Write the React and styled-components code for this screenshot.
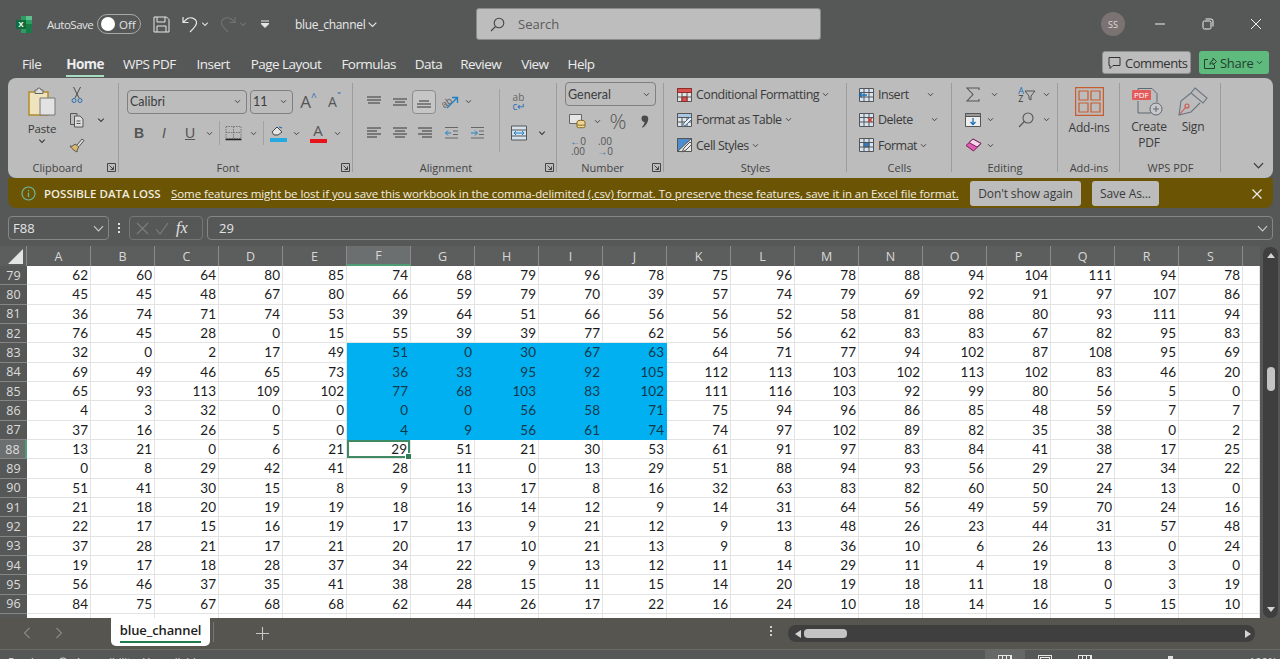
import React from 'react'
import styled, {createGlobalStyle} from 'styled-components'

const UI = '"Open Sans", "Noto Sans", sans-serif'
const COLS = 'ABCDEFGHIJKLMNOPQRS'.split('')
const ROWS = [
  [79, 62, 60, 64, 80, 85, 74, 68, 79, 96, 78, 75, 96, 78, 88, 94, 104, 111, 94, 78],
  [80, 45, 45, 48, 67, 80, 66, 59, 79, 70, 39, 57, 74, 79, 69, 92, 91, 97, 107, 86],
  [81, 36, 74, 71, 74, 53, 39, 64, 51, 66, 56, 56, 52, 58, 81, 88, 80, 93, 111, 94],
  [82, 76, 45, 28, 0, 15, 55, 39, 39, 77, 62, 56, 56, 62, 83, 83, 67, 82, 95, 83],
  [83, 32, 0, 2, 17, 49, 51, 0, 30, 67, 63, 64, 71, 77, 94, 102, 87, 108, 95, 69],
  [84, 69, 49, 46, 65, 73, 36, 33, 95, 92, 105, 112, 113, 103, 102, 113, 102, 83, 46, 20],
  [85, 65, 93, 113, 109, 102, 77, 68, 103, 83, 102, 111, 116, 103, 92, 99, 80, 56, 5, 0],
  [86, 4, 3, 32, 0, 0, 0, 0, 56, 58, 71, 75, 94, 96, 86, 85, 48, 59, 7, 7],
  [87, 37, 16, 26, 5, 0, 4, 9, 56, 61, 74, 74, 97, 102, 89, 82, 35, 38, 0, 2],
  [88, 13, 21, 0, 6, 21, 29, 51, 21, 30, 53, 61, 91, 97, 83, 84, 41, 38, 17, 25],
  [89, 0, 8, 29, 42, 41, 28, 11, 0, 13, 29, 51, 88, 94, 93, 56, 29, 27, 34, 22],
  [90, 51, 41, 30, 15, 8, 9, 13, 17, 8, 16, 32, 63, 83, 82, 60, 50, 24, 13, 0],
  [91, 21, 18, 20, 19, 19, 18, 16, 14, 12, 9, 14, 31, 64, 56, 49, 59, 70, 24, 16],
  [92, 22, 17, 15, 16, 19, 17, 13, 9, 21, 12, 9, 13, 48, 26, 23, 44, 31, 57, 48],
  [93, 37, 28, 21, 17, 21, 20, 17, 10, 21, 13, 9, 8, 36, 10, 6, 26, 13, 0, 24],
  [94, 19, 17, 18, 28, 37, 34, 22, 9, 13, 12, 11, 14, 29, 11, 4, 19, 8, 3, 0],
  [95, 56, 46, 37, 35, 41, 38, 28, 15, 11, 15, 14, 20, 19, 18, 11, 18, 0, 3, 19],
  [96, 84, 75, 67, 68, 68, 62, 44, 26, 17, 22, 16, 24, 10, 18, 14, 16, 5, 15, 10],
]
const TABS = [
  ['File', 25],
  ['Home', 19],
  ['WPS PDF', 21],
  ['Insert', 21],
  ['Page Layout', 20],
  ['Formulas', 19],
  ['Data', 18],
  ['Review', 20],
  ['View', 19],
  ['Help', 0],
]

const Ico = ({w = 18, h = 18, children, vb, sw = 1, stroke = '#555'}) => (
  <svg width={w} height={h} viewBox={vb || `0 0 ${w} ${h}`} fill="none" stroke={stroke} strokeWidth={sw}>
    {children}
  </svg>
)
const Chev = ({s = 8, c = '#3c3c3c', sw = 1.3}) => (
  <svg width={s} height={s} viewBox="0 0 10 10" fill="none" stroke={c} strokeWidth={sw}>
    <path d="M1.5 3.2 5 6.8l3.5-3.6" />
  </svg>
)
const Launcher = () => (
  <LauncherBox>
    <svg width="9" height="9" viewBox="0 0 9 9" fill="none" stroke="#444">
      <path d="M.5 .5h8v8h-8zM2.5 2.5l4 4M6.5 3.5v3h-3" />
    </svg>
  </LauncherBox>
)
const Lines = ({ys, xs, w = 16}) => (
  <Ico w={w} h={14} stroke="#4d4d4d" sw={1.2}>
    {ys.map((y, i) => (
      <path key={y} d={`M${xs[i][0]} ${y}H${xs[i][1]}`} />
    ))}
  </Ico>
)
const Grid5 = ({fill, children}) => (
  <Ico w={17} h={16} stroke="#555">
    <path d="M1.5 1.5h14v13h-14z" fill={fill || '#d8d8d8'} />
    <path d="M1.5 5.5h14M1.5 10h14M6 1.5v13M11 1.5v13" />
    {children}
  </Ico>
)

function Toolbar() {
  return (
    <TitleBar>
      <ExcelLogo>
        <svg width="17" height="17" viewBox="0 0 17 17">
          <path fill="#2d9c62" d="M5 0h11v17H5z" />
          <path fill="#1a7a48" d="M10 8h6v9h-6z" />
          <path fill="#5fc08c" d="M10 0h6v4h-6z" />
          <path fill="#0f6b3a" d="M0 4h10v9H0z" />
          <text x="5" y="11.4" fontSize="8" fontWeight="700" fill="#fff" textAnchor="middle" fontFamily="Liberation Sans">X</text>
        </svg>
      </ExcelLogo>
      <AutoSave>AutoSave</AutoSave>
      <Toggle>
        <Knob />
        <span>Off</span>
      </Toggle>
      <QuickIcon $ml={12}>
        <Ico w={17} h={17} stroke="#e6e6e6">
          <path d="M1 1h12.5L16 3.5V16H1zM4 1v5h8V1M4 16v-6h9v6" />
        </Ico>
      </QuickIcon>
      <QuickIcon $ml={12}>
        <Ico w={16} h={17} stroke="#e6e6e6" sw={1.2}>
          <path d="M1 1v5.5h5.5M1.2 6.3 5.5 2.5c3-1.6 8-.6 9 3.2.7 3-1.5 5.7-6.5 10.3" />
        </Ico>
      </QuickIcon>
      <QuickIcon $ml={3}><Chev s={8} c="#ddd" /></QuickIcon>
      <QuickIcon $ml={11}>
        <Ico w={16} h={17} stroke="#6f7171" sw={1.2}>
          <path d="M15 1v5.5H9.5M14.8 6.3 10.5 2.5c-3-1.6-8-.6-9 3.2-.7 3 1.5 5.7 6.5 10.3" />
        </Ico>
      </QuickIcon>
      <QuickIcon $ml={3}><Chev s={8} c="#6f7171" /></QuickIcon>
      <QuickIcon $ml={14}>
        <Ico w={8} h={8} stroke="#e6e6e6">
          <path d="M0 1h8" />
          <path d="M0 3.5h8L4 7.5z" fill="#e6e6e6" />
        </Ico>
      </QuickIcon>
      <DocName>blue_channel</DocName>
      <QuickIcon $ml={0}><Chev s={11} c="#e6e6e6" sw={1} /></QuickIcon>
      <SearchBox>
        <Ico w={15} h={15} stroke="#444" sw={1.1}>
          <circle cx="9" cy="6" r="4.8" />
          <path d="M5.5 9.5 1 14" />
        </Ico>
        <span>Search</span>
      </SearchBox>
      <Avatar>SS</Avatar>
      <WindowBtn $ml={11}>
        <Ico w={12} h={12} stroke="#eee"><path d="M1 6h10" /></Ico>
      </WindowBtn>
      <WindowBtn $ml={0}>
        <Ico w={12} h={12} stroke="#eee">
          <rect x="1" y="3" width="8" height="8" rx="1.5" />
          <path d="M3.5 1H9a2 2 0 0 1 2 2v5.5" />
        </Ico>
      </WindowBtn>
      <WindowBtn $ml={0}>
        <Ico w={12} h={12} stroke="#eee"><path d="M1 1l10 10M11 1 1 11" /></Ico>
      </WindowBtn>
    </TitleBar>
  )
}

function TabStrip() {
  return (
    <TabBar>
      {TABS.map(([name, gap]) => (
        <Tab key={name} $active={name === 'Home'} $gap={gap}>{name}</Tab>
      ))}
      <TabActions>
        <CommentsBtn>
          <Ico w={13} h={13} stroke="#333">
            <path d="M1 1.5h11v8H5l-3 3v-3H1z" />
          </Ico>
          Comments
        </CommentsBtn>
        <ShareBtn>
          <Ico w={14} h={14} stroke="#26402e">
            <path d="M5 3.5H1.5v9h10V9M7 8.5C7 5.5 9 4.5 10 4.5V2l3.5 3.5L10 9V7c-1 0-2.5 0-3 1.5z" />
          </Ico>
          Share
          <Chev s={7} c="#26402e" />
        </ShareBtn>
      </TabActions>
    </TabBar>
  )
}

function ClipboardGroup() {
  return (
    <Group $w={111}>
      <GroupBody $pl={15}>
        <PasteCol>
          <svg width="30" height="30" viewBox="0 0 30 30" fill="none">
            <path d="M2 5h19v23H2z" fill="#efe3bd" stroke="#b28a2c" strokeWidth="1.5" />
            <path d="M8 5V3h2a2 2 0 0 1 4 0h2v3.5H8z" fill="#ddd" stroke="#666" />
            <path d="M13 11h15v17H13z" fill="#e2e2e2" stroke="#777" />
          </svg>
          <PasteLabel>Paste</PasteLabel>
          <Chev s={8} />
        </PasteCol>
        <Stack $pt={4} $ml={7}>
          <Tool $w={22}>
            <Ico w={14} h={18} stroke="#4a4a4a">
              <path d="M3.5 1 9 12M10.5 1 5 12" />
              <circle cx="4" cy="14.5" r="2" stroke="#2a6db0" />
              <circle cx="10" cy="14.5" r="2" stroke="#2a6db0" />
            </Ico>
          </Tool>
          <ToolLine>
            <Tool $w={22}>
              <Ico w={16} h={16} stroke="#555">
                <path d="M5 12.5H1.5v-11H8v2" />
                <path d="M5.5 4H11l3 3v8H5.5z" fill="#ddd" />
                <path d="M7.5 9h4M7.5 11.5h4" />
              </Ico>
            </Tool>
            <Tool $w={26}><Chev /></Tool>
          </ToolLine>
          <Tool $w={22}>
            <Ico w={16} h={16} stroke="#555">
              <path d="M1 9c2 1 4-1 5-2l4 3c-1 1-2 3-2 5-2-1-5-3-7-6z" fill="#d9b968" />
              <path d="M8 8l5-6 2 1.5-5 6" fill="#ddd" />
            </Ico>
          </Tool>
        </Stack>
      </GroupBody>
      <GroupLabel $pr={12}>Clipboard<Launcher /></GroupLabel>
    </Group>
  )
}

function FontGroup() {
  return (
    <Group $w={234}>
      <GroupBody $pl={8} $column>
        <ToolLine $h={31} $mt={8}>
          <SelectBox $w={120} $h={24}>Calibri<Chev s={7} /></SelectBox>
          <SelectBox $w={43} $h={24} $ml={3}>11<Chev s={7} /></SelectBox>
          <GrowA $size={17} $w={25} $ml={3}>A<sup>^</sup></GrowA>
          <GrowA $size={14} $w={25} $ml={1}>A<sup>ˇ</sup></GrowA>
        </ToolLine>
        <ToolLine $h={32}>
          <Glyph $w={24} $bold>B</Glyph>
          <Glyph $w={26} $italic>I</Glyph>
          <Glyph $w={26} $under>U</Glyph>
          <Tool $w={12}><Chev s={7} /></Tool>
          <VBar />
          <Tool $w={18}>
            <Ico w={17} h={16} stroke="#777">
              <path d="M1 1.5h15v12H1zM8.5 1.5v12M1 7.5h15" strokeDasharray="1.5 1" />
              <path d="M.5 14.5h16" stroke="#222" strokeWidth="1.5" />
            </Ico>
          </Tool>
          <Tool $w={12} $ml={5}><Chev s={7} /></Tool>
          <VBar />
          <Tool $w={20}>
            <svg width="17" height="18" viewBox="0 0 17 18" fill="none" stroke="#444">
              <path d="M2 8l5-5 5 5-4 3H4z" fill="#e4e4e4" />
              <path d="M9 3l3 1" stroke="#1d6fb8" strokeWidth="1.3" />
              <path fill="#25a9e0" stroke="none" d="M0 14h17v4H0z" />
            </svg>
          </Tool>
          <Tool $w={16}><Chev s={7} /></Tool>
          <Tool $w={28}>
            <FontColor>A</FontColor>
          </Tool>
          <Tool $w={10}><Chev s={7} /></Tool>
        </ToolLine>
      </GroupBody>
      <GroupLabel $pr={16}>Font<Launcher /></GroupLabel>
    </Group>
  )
}

function AlignmentGroup() {
  return (
    <Group $w={204}>
      <GroupBody $pl={8}>
        <div>
          <ToolLine $h={31} $mt={8}>
            <Tool $w={26}><Lines ys={[2, 5, 8]} xs={[[1, 15], [1, 15], [2, 14]]} /></Tool>
            <Tool $w={25}><Lines ys={[4, 7, 10]} xs={[[1, 15], [3, 13], [1, 15]]} /></Tool>
            <BoxedTool><Lines ys={[6, 9, 12]} xs={[[3, 13], [1, 15], [1, 15]]} /></BoxedTool>
            <Tool $w={25} $ml={2}>
              <Ico w={18} h={16} stroke="#666">
                <text x="0" y="12" fontSize="10" fill="#666" stroke="none" transform="rotate(-35 5 10)" fontFamily="Liberation Sans">ab</text>
                <path d="M5 14 15 4M10 3.5h5.5V9" stroke="#1f7fc4" strokeWidth="1.3" />
              </Ico>
            </Tool>
            <Tool $w={11}><Chev s={7} /></Tool>
          </ToolLine>
          <ToolLine $h={32}>
            <Tool $w={26}><Lines ys={[2, 5, 8, 11]} xs={[[1, 15], [1, 11], [1, 15], [1, 11]]} /></Tool>
            <Tool $w={25}><Lines ys={[2, 5, 8, 11]} xs={[[1, 15], [3, 13], [1, 15], [3, 13]]} /></Tool>
            <Tool $w={26}><Lines ys={[2, 5, 8, 11]} xs={[[1, 15], [5, 15], [1, 15], [5, 15]]} /></Tool>
            <Tool $w={26}>
              <Ico w={15} h={14} stroke="#666">
                <path d="M1 1.5h13M9 5h5M9 8.5h5M1 12h13" />
                <path d="M7 7H1.5M4 4.5 1.5 7 4 9.5" stroke="#1f7fc4" />
              </Ico>
            </Tool>
            <Tool $w={26}>
              <Ico w={15} h={14} stroke="#666">
                <path d="M1 1.5h13M9 5h5M9 8.5h5M1 12h13" />
                <path d="M1 7h6M5 4.5 7.5 7 5 9.5" stroke="#1f7fc4" />
              </Ico>
            </Tool>
          </ToolLine>
        </div>
        <InnerBar />
        <div>
          <ToolLine $h={31} $mt={8} $ml={8}>
            <Tool $w={22}>
              <WrapIcon>
                <span>ab</span>
                <span>c↵</span>
              </WrapIcon>
            </Tool>
          </ToolLine>
          <ToolLine $h={32} $ml={8}>
            <Tool $w={22}>
              <Ico w={16} h={16} stroke="#555">
                <path d="M.5 1h15v14H.5zM.5 5h15M.5 11h15" fill="#d4e2ee" />
                <path d="M3 8h10M5 6 3 8l2 2M11 6l2 2-2 2" stroke="#1f7fc4" />
              </Ico>
            </Tool>
            <Tool $w={24}><Chev s={8} /></Tool>
          </ToolLine>
        </div>
      </GroupBody>
      <GroupLabel $pr={18}>Alignment<Launcher /></GroupLabel>
    </Group>
  )
}

function NumberGroup() {
  return (
    <Group $w={107}>
      <GroupBody $pl={8} $column>
        <SelectBox $w={91} $h={24} $mt={4}>General<Chev s={7} /></SelectBox>
        <ToolLine $h={26} $mt={2}>
          <Tool $w={26}>
            <Ico w={18} h={16} stroke="#666">
              <path d="M.5 1.5h12v9H.5z" fill="#e5e5e5" />
              <ellipse cx="12" cy="9" rx="4" ry="1.8" fill="#ecd596" stroke="#8a6c1e" />
              <path d="M8 9v5c0 1 8 1 8 0V9M8 11.5c0 1 8 1 8 0" fill="#ecd596" stroke="#8a6c1e" />
            </Ico>
          </Tool>
          <Tool $w={12}><Chev s={7} /></Tool>
          <Percent>%</Percent>
          <Tool $w={24}>
            <svg width="8" height="13" viewBox="0 0 8 13" fill="#4a4a4a">
              <path d="M1 1.5C2 .5 4.500 0 6 1c2 1.500 1.500 5-.5 8C4.500 10.500 3 12 1.500 12.800L1 12c1.500-1.500 2.500-3 2.500-5C2 7 .5 5.500 .5 3.800c0-1 .2-1.700 .5-2.300z" />
            </svg>
          </Tool>
        </ToolLine>
        <ToolLine $h={24}>
          <DecIcon $w={26}><i>←</i>0<br />.00</DecIcon>
          <DecIcon $w={28}>.00<br /><i>→</i>0</DecIcon>
        </ToolLine>
      </GroupBody>
      <GroupLabel $pr={16}>Number<Launcher /></GroupLabel>
    </Group>
  )
}

function StylesGroup() {
  return (
    <Group $w={183}>
      <GroupBody $pl={12} $column $pt={4}>
        <ListTool>
          <Grid5 fill="#e4e4e4">
            <path d="M1.5 1.5h14v4h-14zM6 10h5v4.5H6z" fill="#d9534f" stroke="#8d2b2b" />
          </Grid5>
          <span>Conditional Formatting</span>
          <Chev s={7} />
        </ListTool>
        <ListTool>
          <Grid5 fill="#dfe7ef">
            <path d="M1.5 1.5h14v4h-14z" fill="#a9c6e4" />
            <path d="M6 15l2-4 6-6 2 2-6 6z" fill="#eee" stroke="#4c6f92" />
          </Grid5>
          <span>Format as Table</span>
          <Chev s={7} />
        </ListTool>
        <ListTool>
          <Ico w={17} h={16} stroke="#555">
            <path d="M1.5 1.5h14v13h-14z" fill="#e4e4e4" />
            <path d="M1.5 1.5h14L1.5 14.5z" fill="#4e8ed0" />
            <path d="M6 15l2-4 6-6 2 2-6 6z" fill="#eee" />
          </Ico>
          <span>Cell Styles</span>
          <Chev s={7} />
        </ListTool>
      </GroupBody>
      <GroupLabel>Styles</GroupLabel>
    </Group>
  )
}

function CellsGroup() {
  return (
    <Group $w={105}>
      <GroupBody $pl={11} $column $pt={4}>
        <ListTool $gap={3}>
          <Grid5 fill="#d6e4f2"><path d="M9 8H1.5M4 5.5 1.5 8 4 10.5" stroke="#1a6fb5" strokeWidth="1.3" /></Grid5>
          <CellText $w={46}>Insert</CellText>
          <Chev s={7} />
        </ListTool>
        <ListTool $gap={3}>
          <Grid5 fill="#d6e4f2"><path d="M10 6l4 4M14 6l-4 4" stroke="#d0392e" strokeWidth="1.5" /></Grid5>
          <CellText $w={50}>Delete</CellText>
          <Chev s={7} />
        </ListTool>
        <ListTool $gap={3}>
          <Grid5 fill="#d6e4f2"><path d="M6 5.5h5V10H6z" fill="#2f7fc8" /></Grid5>
          <CellText>Format</CellText>
          <Chev s={7} />
        </ListTool>
      </GroupBody>
      <GroupLabel>Cells</GroupLabel>
    </Group>
  )
}

function EditingGroup() {
  return (
    <Group $w={106}>
      <GroupBody $pl={11} $column $pt={4}>
        <ToolLine $h={26}>
          <Tool $w={20}>
            <Ico w={14} h={15} stroke="#555" sw={1.1}><path d="M13 3V1H1l6 6.5L1 14h12v-2" /></Ico>
          </Tool>
          <Tool $w={22}><Chev s={7} /></Tool>
          <Tool $w={24} $ml={10}>
            <SortIcon><b>A</b><b>Z</b></SortIcon>
            <Ico w={12} h={12} stroke="#555"><path d="M1 2h10L7 7v4l-2-1V7z" /></Ico>
          </Tool>
          <Tool $w={12} $ml={1}><Chev s={7} /></Tool>
        </ToolLine>
        <ToolLine $h={26}>
          <Tool $w={20}>
            <Ico w={16} h={16} stroke="#555">
              <path d="M.5 1.5h15v13H.5z" fill="#eee" />
              <path d="M.5 1.5h15v3H.5z" fill="#999" />
              <path d="M8 6v6.5M5.500 10 8 12.500 10.500 10" stroke="#1a6fb5" strokeWidth="1.3" />
            </Ico>
          </Tool>
          <Tool $w={15}><Chev s={7} /></Tool>
          <Tool $w={28} $ml={14}>
            <Ico w={16} h={16} stroke="#555" sw={1.1}>
              <circle cx="10" cy="6" r="5" />
              <path d="M6.3 9.5 1 15" />
            </Ico>
          </Tool>
          <Tool $w={12}><Chev s={7} /></Tool>
        </ToolLine>
        <ToolLine $h={26}>
          <Tool $w={20}>
            <Ico w={17} h={14} stroke="#7a1f5b">
              <path d="M1 7.5 8 1l8 4.5-7.5 7.5z" fill="#e05bb0" />
              <path d="M4 4.500 12 9l4-3.500L8 1z" fill="#f2d6e8" />
            </Ico>
          </Tool>
          <Tool $w={15}><Chev s={7} /></Tool>
        </ToolLine>
      </GroupBody>
      <GroupLabel>Editing</GroupLabel>
    </Group>
  )
}

function RibbonTail() {
  return (
    <>
      <Group $w={62}>
        <BigTool>
          <svg width="29" height="29" viewBox="0 0 29 29" fill="none" stroke="#c75c2e" strokeWidth="1.2">
            <path d="M.6.6h27.8v27.8H.6z" />
            <path d="M4 4h9v9H4zM16 4h9v9h-9zM4 16h9v9H4zM16 16h9v9h-9z" />
          </svg>
          <BigLabel $mt={4}>Add-ins</BigLabel>
        </BigTool>
        <GroupLabel>Add-ins</GroupLabel>
      </Group>
      <Group $w={101}>
        <BigRow>
          <BigTool $w={58}>
            <PdfIcon>
              <svg width="30" height="30" viewBox="0 0 30 30" fill="none" stroke="#5c6874">
                <path d="M4 8V1.5h14l5 5V15M4 14v12h13" />
                <circle cx="22" cy="22" r="6" fill="#c9c9c9" />
                <path d="M22 19v6M19 22h6" />
              </svg>
              <PdfBadge>PDF</PdfBadge>
            </PdfIcon>
            <BigLabel>Create<br />PDF</BigLabel>
          </BigTool>
          <BigTool $w={30}>
            <svg width="30" height="30" viewBox="0 0 30 30" fill="none" stroke="#6b7580" strokeWidth="1.1">
              <path d="M17 1l12 10-4 5-12-10zM13 6 3 14 1 28l12-3 9-9" />
              <circle cx="9" cy="19" r="2" stroke="#d0524e" />
              <path d="M7.5 20.5 2 27" stroke="#d0524e" />
            </svg>
            <BigLabel>Sign</BigLabel>
          </BigTool>
        </BigRow>
        <GroupLabel>WPS PDF</GroupLabel>
      </Group>
      <CollapseBtn><Chev s={13} sw={1} /></CollapseBtn>
    </>
  )
}

function MessageRow() {
  return (
    <MessageBar>
      <Ico w={15} h={15} stroke="#6fb7a0" sw={1.2}>
        <circle cx="7.5" cy="7.5" r="6.5" />
        <path d="M7.5 6.5V11M7.5 4v1.3" />
      </Ico>
      <MessageTitle>POSSIBLE DATA LOSS</MessageTitle>
      <MessageLink>Some features might be lost if you save this workbook in the comma-delimited (.csv) format. To preserve these features, save it in an Excel file format.</MessageLink>
      <MessageBtn $w={111} $ml={11}>Don't show again</MessageBtn>
      <MessageBtn $w={67} $ml={11}>Save As...</MessageBtn>
      <MessageClose>
        <Ico w={10} h={10} stroke="#eee" sw={1.2}><path d="M.5.5l9 9M9.5.5l-9 9" /></Ico>
      </MessageClose>
    </MessageBar>
  )
}

function FormulaRow() {
  return (
    <FormulaBar>
      <NameBox>
        F88
        <Chev s={13} c="#c8c8c8" sw={0.9} />
      </NameBox>
      <Dots>
        <i /><i /><i />
      </Dots>
      <FxBox>
        <Ico w={13} h={13} stroke="#7d7d7d" sw={1.1}><path d="M1 1l11 11M12 1 1 12" /></Ico>
        <Ico w={14} h={13} stroke="#7d7d7d" sw={1.1}><path d="M1 7l4 5 8-11" /></Ico>
        <FxLabel>fx</FxLabel>
      </FxBox>
      <FormulaInput>
        29
        <Chev s={13} c="#c8c8c8" sw={0.9} />
      </FormulaInput>
    </FormulaBar>
  )
}

function Sheet() {
  return (
    <SheetWrap>
      <Grid>
        <Corner><CornerTriangle /></Corner>
        {COLS.map(c => (
          <ColHead key={c} $active={c === 'F'}>{c}</ColHead>
        ))}
        <ColHead $blank />
        {ROWS.map(([row, ...values]) => (
          <React.Fragment key={row}>
            <RowHead $active={row === 88}>{row}</RowHead>
            {values.map((v, i) => (
              <Cell
                key={i}
                $selected={row >= 83 && row <= 87 && i >= 5 && i <= 9}
                $active={row === 88 && i === 5}
              >
                {v}
              </Cell>
            ))}
            <Cell />
          </React.Fragment>
        ))}
        <RowHead />
        {COLS.map(c => <Cell key={c} />)}
        <Cell />
      </Grid>
      <VScroll>
        <ArrowUp />
        <VTrack><VThumb /></VTrack>
        <ArrowDown />
      </VScroll>
    </SheetWrap>
  )
}

function SheetFooter() {
  return (
    <>
      <SheetTabs>
        <NavArrow>
          <Ico w={8} h={12} stroke="#8a8a88" sw={1.1}><path d="M6.5 1 1.5 6l5 5" /></Ico>
        </NavArrow>
        <NavArrow $ml={24}>
          <Ico w={8} h={12} stroke="#8a8a88" sw={1.1}><path d="M1.5 1l5 5-5 5" /></Ico>
        </NavArrow>
        <SheetTab><span>blue_channel</span></SheetTab>
        <TabDivider />
        <AddSheet>
          <Ico w={13} h={13} stroke="#c8c8c8" sw={1.1}><path d="M6.5 0v13M0 6.5h13" /></Ico>
        </AddSheet>
        <Dots $ml={499} $light>
          <i /><i /><i />
        </Dots>
        <HScroll>
          <ArrowLeft />
          <HThumb />
          <ArrowRight />
        </HScroll>
      </SheetTabs>
      <StatusBar>
        <StatusText $w={48}>Ready</StatusText>
        <StatusIcon>
          <Ico w={14} h={14} stroke="#ddd"><circle cx="7" cy="7" r="5" /></Ico>
        </StatusIcon>
        <StatusText $ml={5}>Accessibility: Unavailable</StatusText>
        <ViewBtn $active $ml={783}><GridGlyph /></ViewBtn>
        <ViewBtn><PageGlyph /></ViewBtn>
        <ViewBtn><BreakGlyph /></ViewBtn>
        <ZoomThumb />
        <StatusText $ml={76}>100%</StatusText>
      </StatusBar>
    </>
  )
}

export default function App() {
  return (
    <>
      <GlobalStyle />
      <Page>
        <Toolbar />
        <TabStrip />
        <Ribbon>
          <ClipboardGroup />
          <FontGroup />
          <AlignmentGroup />
          <NumberGroup />
          <StylesGroup />
          <CellsGroup />
          <EditingGroup />
          <RibbonTail />
        </Ribbon>
        <MessageRow />
        <FormulaRow />
        <Sheet />
        <SheetFooter />
      </Page>
    </>
  )
}

const GlobalStyle = createGlobalStyle`
  html, body { margin: 0; padding: 0; background: #565757; }
  * { box-sizing: border-box; }
`

const Page = styled.div`
  width: 1280px;
  height: 659px;
  overflow: hidden;
  display: flex;
  flex-direction: column;
  background: #565858;
  font-family: ${UI};
  color: #e8e8e8;
`

const TitleBar = styled.div`
  height: 45px;
  flex: none;
  display: flex;
  align-items: center;
  padding-left: 16px;
  padding-top: 3px;
  & > * { flex: none; }
`
const ExcelLogo = styled.div`
  display: flex;
  width: 17px;
`
const AutoSave = styled.span`
  margin-left: 14px;
  font-size: 11.5px;
  letter-spacing: -0.5px;
  width: 50px;
  color: #e2e2e2;
`
const Toggle = styled.div`
  width: 44px;
  height: 20px;
  border: 1px solid #a8a8a8;
  border-radius: 10px;
  display: flex;
  align-items: center;
  padding-left: 3px;
  gap: 4px;
  font-size: 11.5px;
  color: #e2e2e2;
`
const Knob = styled.div`
  width: 14px;
  height: 14px;
  background: #fff;
  border-radius: 50%;
`
const QuickIcon = styled.div`
  display: flex;
  margin-left: ${p => p.$ml}px;
`
const DocName = styled.span`
  margin-left: 26px;
  font-size: 12px;
  letter-spacing: -0.3px;
  color: #e8e8e8;
  width: 72px;
  white-space: nowrap;
`
const SearchBox = styled.div`
  margin-left: 98px;
  width: 345px;
  height: 32px;
  background: #bdbdbd;
  border-radius: 3px;
  border: 1px solid #8a8a8a;
  display: flex;
  align-items: center;
  gap: 13px;
  padding-left: 13px;
  color: #5a5a5a;
  font-size: 13px;
`
const Avatar = styled.div`
  margin-left: 280px;
  width: 24px;
  height: 24px;
  border-radius: 50%;
  background: #7a7372;
  color: #ddd;
  font-size: 9px;
  display: flex;
  align-items: center;
  justify-content: center;
`
const WindowBtn = styled.div`
  width: 48px;
  display: flex;
  justify-content: center;
  margin-left: ${p => p.$ml}px;
`

const TabBar = styled.div`
  height: 33px;
  flex: none;
  display: flex;
  align-items: flex-start;
  padding-left: 22px;
  padding-top: 9px;
`
const Tab = styled.div`
  font-size: 13.5px;
  line-height: 20px;
  color: #ececec;
  font-weight: ${p => (p.$active ? 700 : 400)};
  margin-right: ${p => p.$gap}px;
  letter-spacing: -0.54px;
  white-space: nowrap;
  padding-bottom: 1px;
  border-bottom: ${p => (p.$active ? '2px solid #a8dcc0' : '2px solid transparent')};
`
const TabActions = styled.div`
  margin-left: auto;
  margin-top: -3px;
  padding-right: 11px;
  display: flex;
  gap: 8px;
`
const CommentsBtn = styled.div`
  width: 89px;
  height: 23px;
  background: #bcbcbc;
  border: 1px solid #8f8f8f;
  border-radius: 3px;
  color: #333;
  font-size: 13px;
  display: flex;
  align-items: center;
  gap: 4px;
  padding-left: 5px;
  letter-spacing: -0.45px;
`
const ShareBtn = styled.div`
  width: 70px;
  height: 23px;
  background: #5eba7d;
  border-radius: 3px;
  color: #26402e;
  font-size: 13px;
  letter-spacing: -0.3px;
  display: flex;
  align-items: center;
  gap: 3px;
  padding-left: 4px;
`

const Ribbon = styled.div`
  height: 100px;
  flex: none;
  margin: 0 7px 0 8px;
  background: #bcbcbc;
  border-radius: 8px;
  display: flex;
  position: relative;
  color: #3a3a3a;
  font-size: 12.5px;
  z-index: 1;
`
const Group = styled.div`
  width: ${p => p.$w}px;
  flex: none;
  display: flex;
  flex-direction: column;
  position: relative;
  &::after {
    content: '';
    position: absolute;
    right: 0;
    top: 5px;
    bottom: 6px;
    width: 1px;
    background: #9c9c9c;
  }
`
const GroupBody = styled.div`
  flex: 1;
  min-height: 0;
  display: flex;
  flex-direction: ${p => (p.$column ? 'column' : 'row')};
  padding-left: ${p => p.$pl || 0}px;
  padding-top: ${p => p.$pt || 0}px;
`
const GroupLabel = styled.div`
  height: 20px;
  flex: none;
  font-size: 11px;
  line-height: 20px;
  text-align: center;
  color: #444;
  position: relative;
  padding-right: ${p => p.$pr || 0}px;
`
const LauncherBox = styled.span`
  position: absolute;
  right: 3px;
  top: 5px;
  display: flex;
`
const Stack = styled.div`
  display: flex;
  flex-direction: column;
  padding-top: ${p => p.$pt || 0}px;
  margin-left: ${p => p.$ml || 0}px;
  & > * { height: 26px; }
`
const ToolLine = styled.div`
  display: flex;
  align-items: center;
  height: ${p => p.$h || 26}px;
  margin-top: ${p => p.$mt || 0}px;
  margin-left: ${p => p.$ml || 0}px;
`
const Tool = styled.div`
  width: ${p => p.$w}px;
  margin-left: ${p => p.$ml || 0}px;
  flex: none;
  display: flex;
  align-items: center;
  justify-content: center;
`
const PasteCol = styled.div`
  width: 36px;
  display: flex;
  flex-direction: column;
  align-items: center;
  padding-top: 9px;
  padding-left: 2px;
`
const PasteLabel = styled.span`
  margin-top: 3px;
  font-size: 11.5px;
  letter-spacing: -0.2px;
  line-height: 17px;
`
const SelectBox = styled.div`
  width: ${p => p.$w}px;
  height: ${p => p.$h}px;
  margin-left: ${p => p.$ml || 0}px;
  margin-top: ${p => p.$mt || 0}px;
  flex: none;
  border: 1px solid #808080;
  border-radius: 4px;
  display: flex;
  align-items: center;
  justify-content: space-between;
  padding: 0 5px 0 2px;
  font-family: Lato, sans-serif;
  font-size: 12.5px;
  color: #3c3c3c;
`
const GrowA = styled.div`
  width: ${p => p.$w}px;
  margin-left: ${p => p.$ml}px;
  font-size: ${p => p.$size}px;
  color: #555;
  text-align: center;
  & > sup {
    font-size: 10px;
    line-height: 0;
    color: #2a6db0;
  }
`
const Glyph = styled.div`
  width: ${p => p.$w}px;
  text-align: center;
  font-family: "Liberation Sans", sans-serif;
  font-size: 14px;
  color: #555;
  font-weight: ${p => (p.$bold ? 700 : 400)};
  font-style: ${p => (p.$italic ? 'italic' : 'normal')};
  text-decoration: ${p => (p.$under ? 'underline' : 'none')};
`
const VBar = styled.div`
  width: 1px;
  height: 24px;
  flex: none;
  background: #a2a2a2;
  margin: 0 4px;
`
const FontColor = styled.div`
  width: 17px;
  height: 20px;
  font-size: 15px;
  line-height: 15px;
  text-align: center;
  color: #555;
  border-bottom: 4px solid #e8141c;
`
const BoxedTool = styled.div`
  width: 24px;
  height: 24px;
  border: 1px solid #8c8c8c;
  border-radius: 4px;
  background: #c6c6c6;
  display: flex;
  align-items: center;
  justify-content: center;
`
const InnerBar = styled.div`
  width: 1px;
  height: 63px;
  background: #a2a2a2;
  margin: 11px 0 0 9px;
`
const WrapIcon = styled.div`
  display: flex;
  flex-direction: column;
  font-size: 10px;
  line-height: 9px;
  color: #666;
  & > span:last-child { color: #1f6fb5; }
`
const Percent = styled.div`
  width: 30px;
  text-align: center;
  font-size: 21px;
  font-weight: 300;
  line-height: 20px;
  color: #555;
`
const DecIcon = styled.div`
  width: ${p => p.$w}px;
  font-size: 10px;
  line-height: 10px;
  text-align: center;
  color: #555;
  & > i {
    font-style: normal;
    color: #1f6fb5;
  }
`
const ListTool = styled.div`
  height: 26px;
  display: flex;
  align-items: center;
  gap: ${p => p.$gap || 3}px;
  font-size: 12.5px;
  letter-spacing: -0.5px;
  white-space: nowrap;
`
const CellText = styled.span`
  display: inline-block;
  width: ${p => (p.$w ? `${p.$w}px` : 'auto')};
`
const SortIcon = styled.div`
  display: flex;
  flex-direction: column;
  font-size: 9px;
  line-height: 8px;
  & > b { font-weight: 400; }
  & > b:first-child { color: #1f6fb5; }
`
const BigRow = styled.div`
  flex: 1;
  display: flex;
`
const BigTool = styled.div`
  flex: ${p => (p.$w ? 'none' : 1)};
  width: ${p => (p.$w ? `${p.$w}px` : 'auto')};
  display: flex;
  flex-direction: column;
  align-items: center;
  padding-top: 9px;
`
const BigLabel = styled.div`
  margin-top: ${p => p.$mt || 2}px;
  font-size: 12px;
  line-height: 16px;
  letter-spacing: -0.2px;
  text-align: center;
  color: #3a3a3a;
`
const PdfIcon = styled.div`
  position: relative;
  width: 30px;
  height: 30px;
`
const PdfBadge = styled.span`
  position: absolute;
  left: -2px;
  top: 3px;
  padding: 0 2px;
  background: #e45a5a;
  color: #fff;
  font-size: 8px;
  line-height: 10px;
  border-radius: 1px;
`
const CollapseBtn = styled.div`
  flex: 1;
  display: flex;
  align-items: flex-end;
  justify-content: flex-end;
  padding: 0 8px 6px 0;
`

const MessageBar = styled.div`
  height: 30px;
  flex: none;
  margin: 0 7px 0 8px;
  padding: 1px 0 0 13px;
  background: #6b5504;
  border-radius: 0 0 8px 8px;
  display: flex;
  align-items: center;
  font-size: 12px;
  color: #f0ece0;
`
const MessageTitle = styled.span`
  margin-left: 8px;
  width: 127px;
  font-weight: 600;
  font-size: 11.5px;
  white-space: nowrap;
`
const MessageLink = styled.span`
  width: 788px;
  flex: none;
  text-decoration: underline;
  font-size: 11.5px;
  letter-spacing: -0.08px;
  white-space: nowrap;
`
const MessageBtn = styled.div`
  width: ${p => p.$w}px;
  margin-left: ${p => p.$ml}px;
  height: 25px;
  flex: none;
  background: #bcbcbc;
  border-radius: 3px;
  color: #3a3a3a;
  font-size: 12px;
  text-align: center;
  line-height: 25px;
  letter-spacing: -0.1px;
`
const MessageClose = styled.div`
  margin-left: auto;
  margin-right: 11px;
  display: flex;
`

const FormulaBar = styled.div`
  height: 38px;
  flex: none;
  padding: 8px 7px 6px 8px;
  display: flex;
  align-items: stretch;
  font-size: 13px;
  color: #e4e4e4;
`
const NameBox = styled.div`
  width: 101px;
  border: 1px solid #858585;
  border-radius: 4px;
  display: flex;
  align-items: center;
  justify-content: space-between;
  padding: 0 3px 0 4px;
`
const Dots = styled.div`
  width: ${p => (p.$light ? '6px' : '20px')};
  height: ${p => (p.$light ? '26px' : 'auto')};
  margin-left: ${p => p.$ml || 0}px;
  flex: none;
  display: flex;
  flex-direction: column;
  align-items: center;
  justify-content: center;
  gap: 2px;
  & > i {
    width: 2px;
    height: 2px;
    background: ${p => (p.$light ? '#cfcfcf' : '#e0e0e0')};
  }
`
const FxBox = styled.div`
  width: 74px;
  border: 1px solid #767676;
  border-radius: 4px;
  display: flex;
  align-items: center;
  gap: 6px;
  padding-left: 6px;
`
const FxLabel = styled.span`
  font-family: "Liberation Serif", serif;
  font-style: italic;
  font-size: 16px;
  margin-left: 1px;
`
const FormulaInput = styled.div`
  flex: 1;
  margin-left: 4px;
  border: 1px solid #858585;
  border-radius: 4px;
  display: flex;
  align-items: center;
  justify-content: space-between;
  padding: 0 3px 0 11px;
`

const SheetWrap = styled.div`
  height: 372px;
  flex: none;
  display: flex;
`
const Grid = styled.div`
  width: 1260px;
  flex: none;
  overflow: hidden;
  display: grid;
  grid-template-columns: 27px repeat(19, 64px) 17px;
  grid-template-rows: 20px repeat(19, 19.333px);
  background: #fff;
  font-family: Lato, sans-serif;
  font-size: 13.5px;
  color: #1c1c1c;
`
const Corner = styled.div`
  background: #5c5e5e;
  border-right: 1px solid #8a8a8a;
  position: relative;
`
const CornerTriangle = styled.div`
  position: absolute;
  right: 3px;
  bottom: 2px;
  width: 0;
  height: 0;
  border-style: solid;
  border-width: 0 0 15px 15px;
  border-color: transparent transparent #e4e4e4 transparent;
`
const ColHead = styled.div`
  background: ${p => (p.$active ? '#6c6f6f' : '#5c5e5e')};
  border-right: ${p => (p.$blank ? 'none' : '1px solid #8a8a8a')};
  border-bottom: ${p => (p.$active ? '2px solid #4f9c74' : 'none')};
  color: #d8d8d8;
  font-family: ${UI};
  font-size: 12.5px;
  display: flex;
  align-items: center;
  justify-content: center;
`
const RowHead = styled.div`
  background: ${p => (p.$active ? '#6c6f6f' : '#565858')};
  border-right: ${p => (p.$active ? '2px solid #4f9c74' : 'none')};
  border-bottom: 1px solid #858585;
  color: #dcdcdc;
  font-family: ${UI};
  font-size: 12.5px;
  display: flex;
  align-items: center;
  justify-content: center;
`
const Cell = styled.div`
  position: relative;
  background: ${p => (p.$selected ? '#00b0f0' : '#fff')};
  border-right: 1px solid ${p => (p.$selected ? '#00b0f0' : '#e3e3e3')};
  border-bottom: 1px solid ${p => (p.$selected ? '#00b0f0' : '#e3e3e3')};
  color: ${p => (p.$selected ? '#12384c' : '#1c1c1c')};
  display: flex;
  align-items: center;
  justify-content: flex-end;
  padding-right: 2px;
  ${p =>
    p.$active &&
    `
    box-shadow: inset 0 0 0 2px #3f8a63;
    padding-right: 3px;
    z-index: 2;
    &::after {
      content: '';
      position: absolute;
      right: -2px;
      bottom: -2px;
      width: 5px;
      height: 5px;
      background: #2e7d55;
      border: 1px solid #fff;
    }
  `}
`
const VScroll = styled.div`
  width: 15px;
  margin: 1px 2px 0 3px;
  background: #3f3f3f;
  border-radius: 7px;
  display: flex;
  flex-direction: column;
  align-items: center;
  padding: 6px 0;
`
const ArrowUp = styled.div`
  width: 0;
  height: 0;
  border-style: solid;
  border-width: 0 4px 5px 4px;
  border-color: transparent transparent #d4d4d4 transparent;
`
const ArrowDown = styled.div`
  width: 0;
  height: 0;
  border-style: solid;
  border-width: 5px 4px 0 4px;
  border-color: #d4d4d4 transparent transparent transparent;
`
const VTrack = styled.div`
  flex: 1;
  padding-top: 109px;
`
const VThumb = styled.div`
  width: 8px;
  height: 24px;
  background: #c4c4c4;
  border-radius: 4px;
`

const SheetTabs = styled.div`
  height: 32px;
  flex: none;
  background: #565550;
  display: flex;
  align-items: flex-start;
  padding-left: 23px;
  border-bottom: 1px solid #6a6a68;
`
const NavArrow = styled.div`
  margin-left: ${p => p.$ml || 0}px;
  margin-top: 9px;
  display: flex;
`
const SheetTab = styled.div`
  margin-left: 48px;
  width: 99px;
  height: 28px;
  background: #fff;
  border-radius: 0 0 5px 5px;
  display: flex;
  justify-content: center;
  color: #1c1c1c;
  font-size: 13px;
  font-weight: 600;
  & > span {
    height: 25px;
    line-height: 25px;
    letter-spacing: -0.1px;
    border-bottom: 2px solid #1f7a4c;
  }
`
const TabDivider = styled.div`
  width: 1px;
  height: 20px;
  margin: 4px 0 0 3px;
  background: #777;
`
const AddSheet = styled.div`
  margin: 9px 0 0 42px;
  display: flex;
`
const HScroll = styled.div`
  margin: 7px 0 0 14px;
  width: 467px;
  height: 17px;
  background: #3f3f3f;
  border-radius: 8px;
  display: flex;
  align-items: center;
  padding: 0 4px 0 7px;
`
const ArrowLeft = styled.div`
  width: 0;
  height: 0;
  border-style: solid;
  border-width: 4px 6px 4px 0;
  border-color: transparent #d4d4d4 transparent transparent;
`
const ArrowRight = styled.div`
  width: 0;
  height: 0;
  margin-left: auto;
  border-style: solid;
  border-width: 4px 0 4px 6px;
  border-color: transparent transparent transparent #d4d4d4;
`
const HThumb = styled.div`
  width: 43px;
  height: 9px;
  margin-left: 3px;
  background: #c4c4c4;
  border-radius: 4px;
`
const StatusBar = styled.div`
  flex: 1;
  min-height: 0;
  display: flex;
  align-items: flex-start;
  padding-left: 8px;
  font-size: 11px;
  overflow: hidden;
`
const StatusText = styled.span`
  width: ${p => (p.$w ? `${p.$w}px` : 'auto')};
  margin-left: ${p => p.$ml || 0}px;
  line-height: 24px;
  color: #dcdcdc;
  white-space: nowrap;
  flex: none;
`
const StatusIcon = styled.div`
  margin-top: 6px;
  display: flex;
`
const ViewBtn = styled.div`
  width: 40px;
  height: 9px;
  flex: none;
  margin-left: ${p => p.$ml || 0}px;
  background: ${p => (p.$active ? '#666868' : 'transparent')};
  display: flex;
  justify-content: center;
  padding-top: 5px;
`
const GridGlyph = styled.div`
  width: 14px;
  height: 12px;
  border: 1px solid #e8e8e8;
  background: repeating-linear-gradient(90deg, transparent 0 3px, #e8e8e8 3px 4px);
`
const PageGlyph = styled.div`
  width: 14px;
  height: 12px;
  border: 1px solid #e8e8e8;
  padding: 1px;
  &::before {
    content: '';
    display: block;
    height: 8px;
    border: 1px solid #e8e8e8;
  }
`
const BreakGlyph = styled.div`
  width: 14px;
  height: 12px;
  border: 1px solid #e8e8e8;
  background: repeating-linear-gradient(90deg, transparent 0 3px, #e8e8e8 3px 4px);
`
const ZoomThumb = styled.div`
  width: 5px;
  height: 9px;
  margin-top: 6px;
  margin-left: 63px;
  background: #ddd;
  flex: none;
`
